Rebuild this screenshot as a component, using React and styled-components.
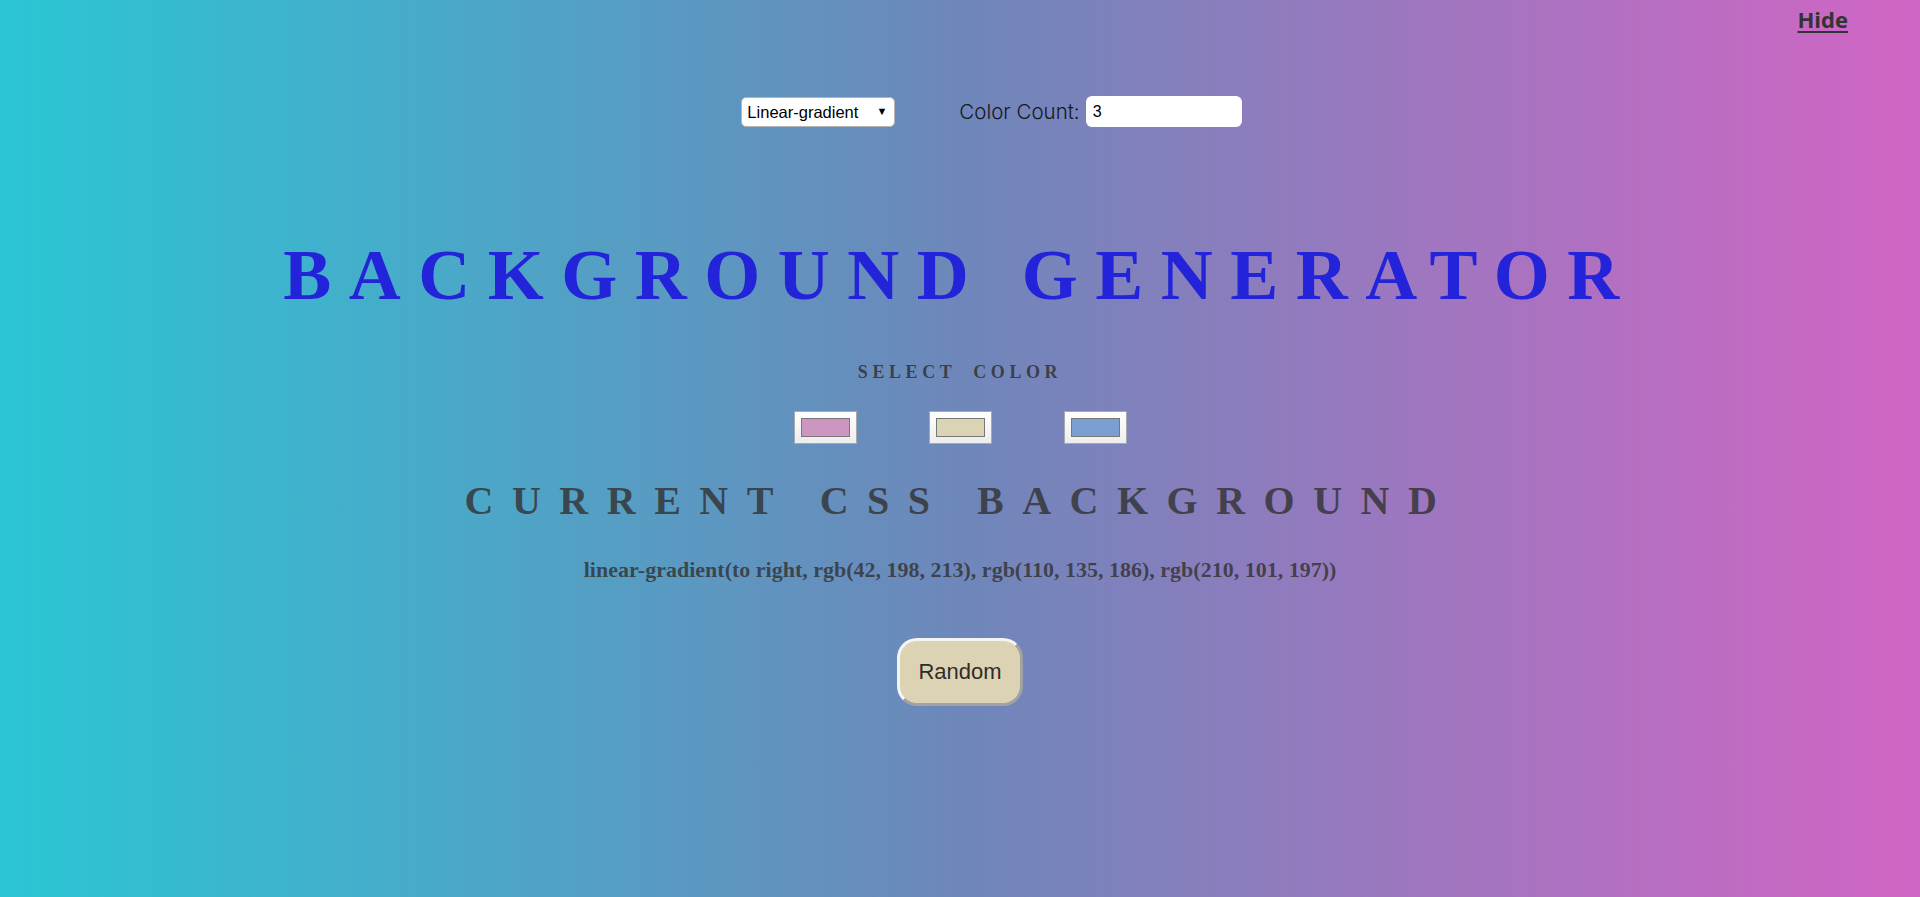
import React, { useState } from "react";
import styled, { createGlobalStyle } from "styled-components";

const colorsList = ["#cc96c0", "#dad4b4", "#7b9fd3"];

export default function App() {
  const [type, setType] = useState("linear");
  const [count, setCount] = useState("3");

  return (
    <>
      <GlobalStyle />
      <Page>
        <TopBar>
          <HideLink href="#">Hide</HideLink>
        </TopBar>

        <Controls>
          <SelectWrap>
            <Select value={type} onChange={(e) => setType(e.target.value)}>
              <option value="linear">Linear-gradient</option>
              <option value="radial">Radial-gradient</option>
            </Select>
          </SelectWrap>
          <CountLabel>
            Color Count:
            <CountInput value={count} onChange={(e) => setCount(e.target.value)} />
          </CountLabel>
        </Controls>

        <Title>BACKGROUND GENERATOR</Title>
        <SubTitle>SELECT COLOR</SubTitle>

        <Swatches>
          {colorsList.map((c) => (
            <SwatchBox key={c}>
              <Swatch $color={c} />
            </SwatchBox>
          ))}
        </Swatches>

        <CurrentTitle>CURRENT CSS BACKGROUND</CurrentTitle>
        <CssText>
          linear-gradient(to right, rgb(42, 198, 213), rgb(110, 135, 186), rgb(210, 101, 197))
        </CssText>

        <RandomButton>Random</RandomButton>
      </Page>
    </>
  );
}

const GlobalStyle = createGlobalStyle`
  body {
    margin: 0;
  }
  * {
    box-sizing: border-box;
  }
`;

const Page = styled.div`
  min-height: 100vh;
  display: flex;
  flex-direction: column;
  align-items: center;
  background: linear-gradient(to right, rgb(42, 198, 213), rgb(110, 135, 186), rgb(210, 101, 197));
  font-family: "Liberation Serif", serif;
`;

const TopBar = styled.div`
  width: 100%;
  display: flex;
  justify-content: flex-end;
  padding: 6px 72px 0 0;
`;

const HideLink = styled.a`
  font-family: "Open Sans", sans-serif;
  font-weight: 700;
  font-size: 22px;
  line-height: 26px;
  color: #333;
  text-decoration: underline;
  text-underline-offset: 3px;
`;

const Controls = styled.div`
  display: flex;
  align-items: center;
  gap: 64px;
  margin-top: 64px;
  padding-left: 63px;
  height: 31px;
`;

const SelectWrap = styled.div`
  position: relative;
  &::after {
    content: "▼";
    position: absolute;
    right: 8px;
    top: 8px;
    font-size: 11px;
    color: #000;
    pointer-events: none;
  }
`;

const Select = styled.select`
  appearance: none;
  width: 154px;
  height: 30px;
  padding: 0 20px 0 5px;
  border: 1px solid #b5b5b5;
  border-radius: 5px;
  background: #fff;
  font-family: "Liberation Sans", sans-serif;
  font-size: 16.5px;
  color: #000;
`;

const CountLabel = styled.label`
  display: flex;
  align-items: center;
  gap: 6px;
  font-family: Inter, sans-serif;
  font-weight: 300;
  font-size: 20.5px;
  color: #16161e;
`;

const CountInput = styled.input`
  width: 156px;
  height: 31px;
  padding: 0 7px;
  border: none;
  border-radius: 6px;
  background: #fff;
  font-family: "Liberation Sans", sans-serif;
  font-size: 16px;
  color: #000;
`;

const Title = styled.h1`
  margin: 112px 0 0;
  font-size: 72px;
  line-height: 1;
  font-weight: 700;
  letter-spacing: 17.5px;
  color: #2323d9;
  white-space: nowrap;
`;

const SubTitle = styled.h3`
  margin: 52px 0 0;
  font-size: 18px;
  line-height: 1;
  font-weight: 700;
  letter-spacing: 4.6px;
  word-spacing: 8px;
  color: rgba(51, 51, 51, 0.85);
`;

const Swatches = styled.div`
  display: flex;
  gap: 72px;
  margin-top: 30px;
`;

const SwatchBox = styled.div`
  width: 63px;
  height: 33px;
  padding: 6px;
  border: 1px solid #a9a9a9;
  background: linear-gradient(#ffffff, #ededed);
`;

const Swatch = styled.div`
  width: 100%;
  height: 100%;
  border: 1px solid #777;
  background: ${({ $color }) => $color};
`;

const CurrentTitle = styled.h2`
  margin: 37px 0 0;
  font-size: 40px;
  line-height: 1;
  font-weight: 700;
  letter-spacing: 18.5px;
  color: rgba(51, 51, 51, 0.82);
  white-space: nowrap;
`;

const CssText = styled.p`
  margin: 38px 0 0;
  font-size: 22px;
  line-height: 1;
  font-weight: 700;
  color: rgba(51, 51, 51, 0.82);
`;

const RandomButton = styled.button`
  margin-top: 57px;
  width: 126px;
  height: 68px;
  border-radius: 20px;
  border-style: solid;
  border-width: 3px;
  border-color: #f4f4f4 #a2a2a2 #a2a2a2 #f4f4f4;
  background: #dbd3b3;
  font-family: "Liberation Sans", sans-serif;
  font-size: 22px;
  color: #332a2a;
  cursor: pointer;
`;
